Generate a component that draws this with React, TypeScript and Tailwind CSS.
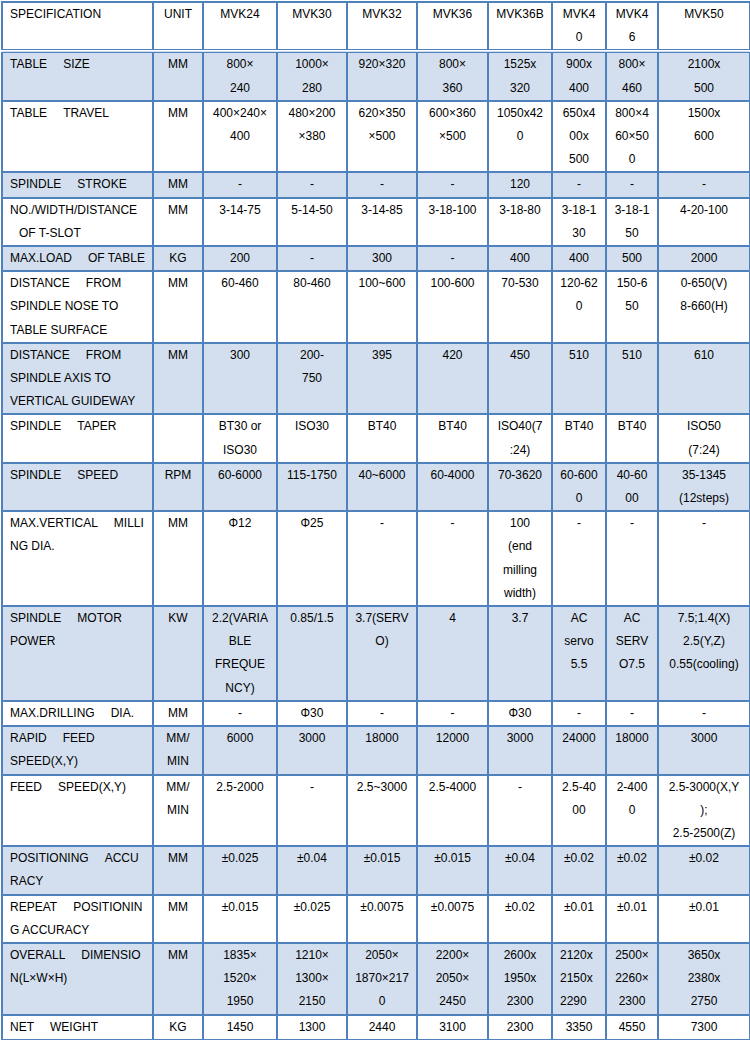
import React from 'react';

// each cell: lines separated by "\n", "|" = wide gap, "^" = indent
type Row = { cells: string[]; left?: number[] };

const header = ['SPECIFICATION', 'UNIT', 'MVK24', 'MVK30', 'MVK32', 'MVK36', 'MVK36B', 'MVK4\n0', 'MVK4\n6', 'MVK50'];

const rows: Row[] = [
  { cells: ['TABLE|SIZE', 'MM', '800×\n240', '1000×\n280', '920×320', '800×\n360', '1525x\n320', '900x\n400', '800×\n460', '2100x\n500'] },
  { cells: ['TABLE|TRAVEL', 'MM', '400×240×\n400', '480×200\n×380', '620×350\n×500', '600×360\n×500', '1050x42\n0', '650x4\n00x\n500', '800×4\n60×50\n0', '1500x\n600'] },
  { cells: ['SPINDLE|STROKE', 'MM', '-', '-', '-', '-', '120', '-', '-', '-'] },
  { cells: ['NO./WIDTH/DISTANCE\n^OF T-SLOT', 'MM', '3-14-75', '5-14-50', '3-14-85', '3-18-100', '3-18-80', '3-18-1\n30', '3-18-1\n50', '4-20-100'] },
  { cells: ['MAX.LOAD|OF TABLE', 'KG', '200', '-', '300', '-', '400', '400', '500', '2000'] },
  { cells: ['DISTANCE|FROM\nSPINDLE NOSE TO\nTABLE SURFACE', 'MM', '60-460', '80-460', '100~600', '100-600', '70-530', '120-62\n0', '150-6\n50', '0-650(V)\n8-660(H)'] },
  { cells: ['DISTANCE|FROM\nSPINDLE AXIS TO\nVERTICAL GUIDEWAY', 'MM', '300', '200-\n750', '395', '420', '450', '510', '510', '610'] },
  { cells: ['SPINDLE|TAPER', '', 'BT30 or\nISO30', 'ISO30', 'BT40', 'BT40', 'ISO40(7\n:24)', 'BT40', 'BT40', 'ISO50\n(7:24)'] },
  { cells: ['SPINDLE|SPEED', 'RPM', '60-6000', '115-1750', '40~6000', '60-4000', '70-3620', '60-600\n0', '40-60\n00', '35-1345\n(12steps)'] },
  { cells: ['MAX.VERTICAL|MILLI\nNG DIA.', 'MM', 'Φ12', 'Φ25', '-', '-', '100\n(end\nmilling\nwidth)', '-', '-', '-'] },
  { cells: ['SPINDLE|MOTOR\nPOWER', 'KW', '2.2(VARIA\nBLE\nFREQUE\nNCY)', '0.85/1.5', '3.7(SERV\nO)', '4', '3.7', 'AC\nservo\n5.5', 'AC\nSERV\nO7.5', '7.5;1.4(X)\n2.5(Y,Z)\n0.55(cooling)'] },
  { cells: ['MAX.DRILLING|DIA.', 'MM', '-', 'Φ30', '-', '-', 'Φ30', '-', '-', '-'] },
  { cells: ['RAPID|FEED\nSPEED(X,Y)', 'MM/\nMIN', '6000', '3000', '18000', '12000', '3000', '24000', '18000', '3000'] },
  { cells: ['FEED|SPEED(X,Y)', 'MM/\nMIN', '2.5-2000', '-', '2.5~3000', '2.5-4000', '-', '2.5-40\n00', '2-400\n0', '2.5-3000(X,Y\n);\n2.5-2500(Z)'] },
  { cells: ['POSITIONING|ACCU\nRACY', 'MM', '±0.025', '±0.04', '±0.015', '±0.015', '±0.04', '±0.02', '±0.02', '±0.02'] },
  { cells: ['REPEAT|POSITIONIN\nG ACCURACY', 'MM', '±0.015', '±0.025', '±0.0075', '±0.0075', '±0.02', '±0.01', '±0.01', '±0.01'] },
  { cells: ['OVERALL|DIMENSIO\nN(L×W×H)', 'MM', '1835×\n1520×\n1950', '1210×\n1300×\n2150', '2050×\n1870×217\n0', '2200×\n2050×\n2450', '2600x\n1950x\n2300', '2120x\n2150x\n2290', '2500×\n2260×\n2300', '3650x\n2380x\n2750'], left: [7] },
  { cells: ['NET|WEIGHT', 'KG', '1450', '1300', '2440', '3100', '2300', '3350', '4550', '7300'] },
];

const widths = [151, 50, 74, 70, 70, 71, 64, 54, 52, 92];

function Line({ text }: { text: string }) {
  if (text.startsWith('^')) {
    return (
      <div>
        <span className="inline-block w-[9px]" />
        {text.slice(1)}
      </div>
    );
  }
  const parts = text.split('|');
  return (
    <div>
      {parts.map((p, i) => (
        <React.Fragment key={i}>
          {i > 0 && <span className="inline-block w-[16px]" />}
          {p}
        </React.Fragment>
      ))}
    </div>
  );
}

function Cell({ text, first, leftAlign, head }: { text: string; first: boolean; leftAlign?: boolean; head?: boolean }) {
  const lines = text.split('\n');
  return (
    <td
      className={`border-2 border-[#4f81bd] align-top p-0 whitespace-nowrap ${head ? 'border-b-4 border-double' : ''} ${
        first || leftAlign ? 'text-left pl-[7px]' : 'text-center'
      }`}
    >
      {text === '' ? <div>&nbsp;</div> : lines.map((l, i) => <Line key={i} text={l} />)}
      {head && lines.length < 2 && <div>&nbsp;</div>}
    </td>
  );
}

export default function App() {
  return (
    <div className="w-[750px] min-h-[1040px] bg-white pl-[1px] pt-[1px]">
      <table
        className="border-collapse table-fixed w-[748px] text-[12px] leading-[23.2px] text-black"
        style={{ fontFamily: '"Liberation Sans", Arial, sans-serif' }}
      >
        <colgroup>
          {widths.map((w, i) => (
            <col key={i} style={{ width: w }} />
          ))}
        </colgroup>
        <thead>
          <tr className="bg-white">
            {header.map((h, i) => (
              <Cell key={i} text={h} first={i === 0} head />
            ))}
          </tr>
        </thead>
        <tbody>
          {rows.map((r, ri) => (
            <tr key={ri} className={ri % 2 === 0 ? 'bg-[#d3dfee]' : 'bg-white'}>
              {r.cells.map((c, ci) => (
                <Cell key={ci} text={c} first={ci === 0} leftAlign={r.left?.includes(ci)} />
              ))}
            </tr>
          ))}
        </tbody>
      </table>
    </div>
  );
}
